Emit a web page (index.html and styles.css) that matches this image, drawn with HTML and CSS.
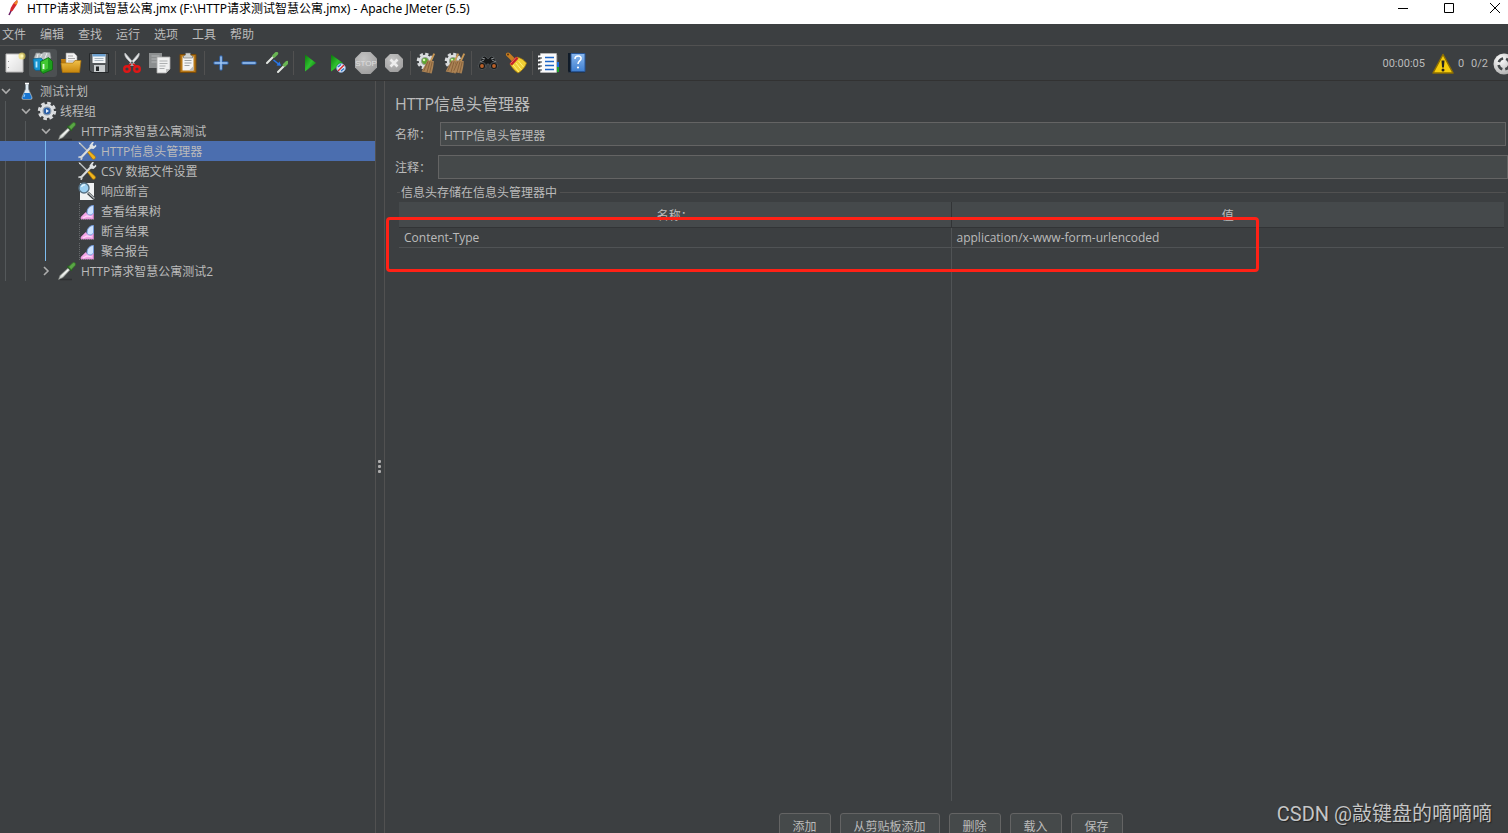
FILE: index.html
```html
<!DOCTYPE html>
<html lang="zh-CN">
<head>
<meta charset="utf-8">
<title>Apache JMeter (5.5)</title>
<link rel="stylesheet" href="styles.css">
</head>
<body>
<svg class="defs" width="0" height="0" aria-hidden="true">
  <defs>
    <linearGradient id="gGreen" x1="0" y1="0" x2="1" y2="1"><stop offset="0" stop-color="#0a7a0a"/><stop offset=".5" stop-color="#2fc02f"/><stop offset="1" stop-color="#067006"/></linearGradient>
    <linearGradient id="gGold" x1="0" y1="0" x2="0" y2="1"><stop offset="0" stop-color="#f0c04a"/><stop offset="1" stop-color="#c8860c"/></linearGradient>
    <linearGradient id="gPaper" x1="0" y1="0" x2="1" y2="1"><stop offset="0" stop-color="#ffffff"/><stop offset="1" stop-color="#dcdcdc"/></linearGradient>
    <linearGradient id="gBlue" x1="0" y1="0" x2="0" y2="1"><stop offset="0" stop-color="#8ab8ee"/><stop offset="1" stop-color="#3f7fd0"/></linearGradient>
    <radialGradient id="gGrey" cx=".4" cy=".3" r=".8"><stop offset="0" stop-color="#c4c4c4"/><stop offset="1" stop-color="#9c9c9c"/></radialGradient>
    <radialGradient id="gBall" cx=".35" cy=".3" r=".8"><stop offset="0" stop-color="#ffffff"/><stop offset="1" stop-color="#a8a8a8"/></radialGradient>
    <symbol id="pipette" viewBox="0 0 20 20"><path d="M3 18.500h12" stroke="#242627" stroke-width="1.500" opacity=".6"/><path d="M1.500 18.500l1.500-4 8-7.500 2 2L6 16.500z" fill="#d4d8d4" stroke="#7c817c" stroke-width=".6"/><path d="M4.500 15l6.500-6" stroke="#fff"/><path d="M10.500 5l4.500 4.500" stroke="#285f20" stroke-width="2"/><path d="M11.500 6l4-4c2-1.200 3.700.4 2.600 2.500L14.200 8.700z" fill="#5aa646" stroke="#327326" stroke-width=".8"/></symbol>
    <symbol id="tools" viewBox="0 0 20 20"><path d="M2.500 2L11 10.500" stroke="#b9bdc0" stroke-width="1.500"/><path d="M1.500 1l2 1.200-1 1z" fill="#eee"/><path d="M10.500 11.200l1.500-1.500 6 5.500c1.500 1.700-.8 4-2.500 2.700z" fill="#f2b51c" stroke="#a37109" stroke-width=".7"/><path d="M3.500 17L14 6" stroke="#d9dbdc" stroke-width="2.200"/><path d="M1.200 15.500l2.500-.5 2 2-.8 2-1.600-.3.500-1.200-1-.8-1.200.6z" fill="#d0d3d5"/><path d="M13 7.500l-.5-3L15.200 1l1.800.2-1.500 2.600 1.400 1.400L19 3.500l.3 2L16.500 8z" fill="#dfe2e4"/></symbol>
    <symbol id="chart" viewBox="0 0 20 20"><path d="M2.500 2v16M2 18.500h16" stroke="#686b6d" stroke-width="1" stroke-dasharray="1 1"/><path d="M4 18v-2l4.500-4.500 3 1.500 5-1v6z" fill="#f3a6e6" stroke="#d486c8" stroke-width=".7"/><path d="M10 11c.5-4 3-6.500 6.500-6.500V12c-1 1.500-2 2-3.500 2-2 0-3-1-3-3z" fill="#cfe3ff" stroke="#6f9bdf" stroke-width=".9"/><path d="M6 17l4-2 5 1" fill="none" stroke="#ffd6f7" stroke-width="1.200"/></symbol>
    <symbol id="gear" viewBox="0 0 20 20"><circle cx="10" cy="10" r="7.800" fill="none" stroke="#d8dadc" stroke-width="2.800" stroke-dasharray="3.600 2.520"/><circle cx="10" cy="10" r="7" fill="#dde0e2"/></symbol>
    <symbol id="down" viewBox="0 0 12 12"><path d="M2 4l4 4 4-4" fill="none" stroke="#adadad" stroke-width="1.600"/></symbol>
    <symbol id="broom" viewBox="0 0 14 20"><path d="M12.500.5L9 8" stroke="#c79755" stroke-width="1.800"/><path d="M6 7l6 .5c0 4.500-1 8-2 12L.5 17.500C2.500 14 4 11 6 7z" fill="#ab8254"/><path d="M6.500 8L2.500 17M8.500 8L5.500 18.500M10.500 8.500L8 19" stroke="#7b5630" stroke-width=".7"/></symbol>
    <symbol id="cleargear" viewBox="0 0 20 20"><use href="#gear" width="19" height="19"/><circle cx="9.500" cy="9.500" r="3.800" fill="#5da630" stroke="#9a9c9a"/><circle cx="8.500" cy="8.500" r="1.300" fill="#d4f5b2"/></symbol>
  </defs>
</svg>
<div class="app">
  <header class="titlebar">
    <svg class="feather" viewBox="0 0 14 18"><path d="M4 12C4 8 7 3 11 0c1 1 .5 3-.5 5L6.500 11z" fill="#d4262c"/><path d="M8 3.500L11 0c1 1 .5 3-.5 5z" fill="#ef8b27"/><path d="M3 15l2-4" fill="none" stroke="#6a1c64" stroke-width="1.500"/></svg>
    <h1 class="caption">HTTP请求测试智慧公寓.jmx (F:\HTTP请求测试智慧公寓.jmx) - Apache JMeter (5.5)</h1>
    <div class="winctl">
      <button aria-label="最小化"><svg viewBox="0 0 12 12"><path d="M1 6.500h10"/></svg></button>
      <button aria-label="最大化"><svg viewBox="0 0 12 12"><path d="M1.500 1.500h9v9h-9z"/></svg></button>
      <button aria-label="关闭"><svg viewBox="0 0 12 12"><path d="M1 1l10 10M11 1L1 11"/></svg></button>
    </div>
  </header>
  <nav class="menubar">
    <button>文件</button><button>编辑</button><button>查找</button><button>运行</button><button>选项</button><button>工具</button><button>帮助</button>
  </nav>
  <div class="toolbar">
    <button class="tool" aria-label="新建"><svg viewBox="0 0 22 22"><path d="M2 2h17v18H2z" fill="url(#gPaper)" stroke="#b9b9b9"/><path d="M4.500 9v1m0 5v1" stroke="#999"/><circle cx="18" cy="4" r="3.500" fill="#f3df60" opacity=".65"/><circle cx="18" cy="4" r="1.500" fill="#fff8b0"/></svg></button>
    <button class="tool lit" aria-label="模板"><svg viewBox="0 0 22 22"><path d="M2 6l2-5 4 0 1 1 3-2 6 .5 1 5.500-8 4z" fill="#b9bec0" stroke="#85898b" stroke-width=".6"/><path d="M6 2l-1 4m5-4L8 6m7-5l-2 5" stroke="#eceeef"/><path d="M1 7l8-1 2 2v10l-7 .5L2 17z" fill="#1794cf" stroke="#0a5c8b" stroke-width=".7"/><path d="M4.500 9.500v6" stroke="#b8e8ff" stroke-width="1.800"/><path d="M8.500 9.500l8-4 4 4v8L11 21.500 8.500 19z" fill="#1d9e1d" stroke="#0a680a" stroke-width=".7"/><path d="M9 10l7-3.500v10L10 19.500z" fill="#42c832"/><path d="M11.500 12v5" stroke="#dcffdc" stroke-width="1.800"/></svg></button>
    <button class="tool" aria-label="打开"><svg viewBox="0 0 22 22"><path d="M1 7h5l2 2h10v11H2z" fill="#bd7b0d"/><path d="M6 1h8l3 3v9H6z" fill="#f3f3f3" stroke="#999" stroke-width=".6"/><path d="M8 4h5M8 6.500h7M8 9h7" stroke="#aaa"/><path d="M1 11h12l2-2.500h6l-1.500 12h-17z" fill="url(#gGold)" stroke="#a8700b" stroke-width=".7"/></svg></button>
    <button class="tool" aria-label="保存"><svg viewBox="0 0 22 22"><path d="M1.500 1.500h19v19H4l-2.500-2z" fill="#54585b" stroke="#25282a"/><path d="M4.500 2h13v9h-13z" fill="#f2f5f7"/><path d="M4.500 2h13v2.500h-13z" fill="#6ca0cf"/><path d="M6.500 6.500h9m-9 2h9" stroke="#a8b4bd"/><path d="M6 13h11v7H6z" fill="#c9cdcf"/><path d="M8 14.500h3v4.500H8z" fill="#25282a"/></svg></button>
    <span class="sep"></span>
    <button class="tool" aria-label="剪切"><svg viewBox="0 0 22 22"><path d="M4 1c-1 3 2 6 5 9l3 4 1.500-2zM18 1c1 3-2 6-5 9l-3 4-1.500-2z" fill="#e7e9ea" stroke="#b5b8ba" stroke-width=".8"/><path d="M10 12l-3 2M12 12l3 2" stroke="#d01010" stroke-width="2"/><circle cx="6" cy="17" r="2.800" fill="none" stroke="#df1717" stroke-width="2.400"/><circle cx="16" cy="17" r="2.800" fill="none" stroke="#df1717" stroke-width="2.400"/></svg></button>
    <button class="tool" aria-label="复制"><svg viewBox="0 0 22 22"><path d="M0 1h13v15H0z" fill="#8c8f90"/><path d="M2.500 4h8m-8 3h6m-6 3h6" stroke="#b2b5b6"/><path d="M8 5h13v12l-4 4H8z" fill="#eff0f0" stroke="#a6a6a6" stroke-width=".8"/><path d="M10.500 9h8m-8 2.500h8m-8 2.500h6m-6 2.500h5" stroke="#adb0b1"/><path d="M17 21v-4h4z" fill="#bfc1c1"/></svg></button>
    <button class="tool" aria-label="粘贴"><svg viewBox="0 0 22 22"><path d="M3 2.500h16v18H3z" fill="#b87817" stroke="#76490a"/><path d="M5.500 4.500h11v14h-11z" fill="#f5f5f5"/><path d="M7.500 8.500h7m-7 2.500h7m-7 2.500h5" stroke="#9ea2a4"/><path d="M6.500 4l2-1V1h5v2l2 1v2h-9z" fill="#d0d3d1" stroke="#666" stroke-width=".6"/><path d="M12 18.500l4.500-4.500v4.500z" fill="#bbb"/></svg></button>
    <span class="sep"></span>
    <button class="tool" aria-label="展开"><svg viewBox="0 0 22 22"><path d="M11 5v12M5 11h12" stroke="#3467ac" stroke-width="3.400" stroke-linecap="round"/><path d="M11 5v12M5 11h12" stroke="#9fc8f5" stroke-width="1.500" stroke-linecap="round"/></svg></button>
    <button class="tool" aria-label="折叠"><svg viewBox="0 0 22 22"><path d="M5 11h12" stroke="#3467ac" stroke-width="3.400" stroke-linecap="round"/><path d="M5 11h12" stroke="#9fc8f5" stroke-width="1.500" stroke-linecap="round"/></svg></button>
    <button class="tool" aria-label="切换"><svg viewBox="0 0 22 22"><path d="M1 11l7-7M12 20l7-7" stroke="#e3e7e3" stroke-width="2" stroke-linecap="round"/><path d="M8 4l2.500-2.500M18.500 13l2.500-2.500" stroke="#69b553" stroke-width="3.400" stroke-linecap="round"/><path d="M7.500 8l5 4" stroke="#2878ec" stroke-width="1.600"/><path d="M10.500 13.500l4.500.3-1.500-4.300z" fill="#2878ec"/></svg></button>
    <span class="sep"></span>
    <button class="tool" aria-label="启动"><svg viewBox="0 0 22 22"><path d="M6 2.500v17L17 11z" fill="url(#gGreen)"/></svg></button>
    <button class="tool" aria-label="不停顿开始"><svg viewBox="0 0 22 22"><path d="M4 2.500v17L16 11z" fill="url(#gGreen)"/><circle cx="14" cy="16" r="4.300" fill="#edf2f8" stroke="#86a6d1"/><path d="M11 15l3-2.500M14 19l3-2.500" stroke="#2875cd" stroke-width="1.500"/><path d="M11 19l6-6" stroke="#d3292d" stroke-width="1.500"/></svg></button>
    <button class="tool" aria-label="停止"><svg viewBox="0 0 22 22"><path d="M6.500 0h9L22 6.500v9L15.500 22h-9L0 15.500v-9z" fill="url(#gGrey)"/><text x="11" y="14" class="stop">STOP</text></svg></button>
    <button class="tool" aria-label="关闭"><svg viewBox="0 0 22 22"><path d="M7 2h8l5 5v8l-5 5H7l-5-5V7z" fill="url(#gGrey)"/><path d="M7.500 7.500l7 7m0-7l-7 7" stroke="#ededed" stroke-width="2.600"/></svg></button>
    <span class="sep"></span>
    <button class="tool" aria-label="清除"><svg viewBox="0 0 22 22"><use href="#cleargear" width="19" height="19"/><use href="#broom" x="5" y="1" width="15" height="21"/></svg></button>
    <button class="tool" aria-label="清除全部"><svg viewBox="0 0 22 22"><use href="#cleargear" width="19" height="19"/><use href="#broom" x="1" y="1" width="15" height="21"/><use href="#broom" x="7" y="1" width="15" height="21"/></svg></button>
    <span class="sep"></span>
    <button class="tool" aria-label="查找"><svg viewBox="0 0 22 22"><path d="M5 5l3-1 3 3 3-3 3 1 4 9-3 3-5-1-1-4h-2l-1 4-5 1-3-3z" fill="#17191a" stroke="#555a5d" stroke-width=".7"/><path d="M5 6l3 1M17 6l-3 1M3 10l4-2M19 10l-4-2" stroke="#8c9194"/><circle cx="5" cy="14" r="3.700" fill="#17191a" stroke="#4d5153"/><circle cx="17" cy="14" r="3.700" fill="#17191a" stroke="#4d5153"/><circle cx="5" cy="14" r="1.900" fill="#b96028"/><circle cx="17" cy="14" r="1.900" fill="#b96028"/></svg></button>
    <button class="tool" aria-label="重置查找"><svg viewBox="0 0 22 22"><path d="M3 2.500l5 5" stroke="#c57d22" stroke-width="4" stroke-linecap="round"/><circle cx="3" cy="2.500" r="1" fill="#5d3408"/><path d="M5 12l7-7c4 1 7 3 9.500 6-1 4-5 8-8.500 10-3-2-6-5-8-9z" fill="#f0cf35" stroke="#a77a06" stroke-width=".7"/><path d="M8 13l6 7m-3-9l5.500 7m-3-9l5 6" stroke="#fff07a"/><path d="M4.500 11.500L11 4.500l2.500 2-6.500 7z" fill="#c4202a"/><path d="M5.500 11.500l5.500-6" stroke="#ec7b54"/></svg></button>
    <span class="sep"></span>
    <button class="tool" aria-label="函数助手"><svg viewBox="0 0 22 22"><path d="M18 3h2v17h-2z" fill="#555"/><path d="M19 10h2v5h-2z" fill="#1a6ddd"/><path d="M19 15h2v5h-2z" fill="#18a428"/><path d="M2.500 1.500h16v19h-16z" fill="#fafafa" stroke="#ccc" stroke-width=".5"/><path d="M7 5.500h9m-9 4h9m-9 4h9m-9 4h9" stroke="#1d66c8" stroke-width="1.400"/><path d="M0 4.500h4M0 8.500h4M0 12.500h4M0 16.500h4" stroke="#fff" stroke-width="2"/><path d="M1 6h3m-3 4h3m-3 4h3m-3 4h3" stroke="#34383a"/></svg></button>
    <button class="tool" aria-label="帮助"><svg viewBox="0 0 22 22"><path d="M2 1h4v20H3l-1-2z" fill="#101b28"/><path d="M5 1.500h14v18H5z" fill="url(#gBlue)" stroke="#275596"/><path d="M3 20.500h16" stroke="#27374a"/><path d="M9 7c0-4 7-4 6 0-.4 2-3 2-3 5" fill="none" stroke="#fff" stroke-width="1.500"/><circle cx="12" cy="15.500" r="1.100" fill="#fff"/></svg></button>
    <div class="status">
      <span>00:00:05</span>
      <svg class="warn" viewBox="0 0 22 22"><path d="M11 1.500L21 20H1z" fill="#f6cc0c" stroke="#8f7000" stroke-width="1.500" stroke-linejoin="round"/><path d="M9.500 7.500h3l-.6 7h-1.800z" fill="#222"/><circle cx="11" cy="17" r="1.500" fill="#222"/></svg>
      <span>0</span>
      <span class="threads">0/2</span>
      <svg class="ball" viewBox="0 0 22 22"><circle cx="11" cy="11" r="10.500" fill="url(#gBall)"/><circle cx="11" cy="11" r="5.500" fill="none" stroke="#44484a" stroke-width="2.600" stroke-dasharray="5.600 3.040" stroke-dashoffset="-1.500"/></svg>
    </div>
  </div>
  <main class="main">
    <aside class="side">
      <ul class="tree">
        <li><div class="row"><svg class="chev"><use href="#down"/></svg><svg class="ico" viewBox="0 0 20 20"><path d="M8.500 3h3v5l3.500 8c.5 1.500 0 2.500-1.500 2.500h-7c-1.500 0-2-1-1.500-2.500L8.500 8z" fill="#dfeaf2" stroke="#7e8b94" stroke-width=".7"/><path d="M7.300 12h5.400l1.800 4c.4 1.300 0 2-1.200 2H6.700c-1.200 0-1.600-.7-1.200-2z" fill="#1875d1"/><path d="M7.800 13.500l-1 2.500" stroke="#8fd0ff" stroke-width="1.200"/><path d="M8 2.500h4" stroke="#fff" stroke-width="1.500"/></svg><span>测试计划</span></div>
          <ul class="g1">
            <li><div class="row"><svg class="chev"><use href="#down"/></svg><svg class="ico" viewBox="0 0 20 20"><use href="#gear" width="20" height="20"/><circle cx="10" cy="10" r="3.900" fill="#2b60a8" stroke="#8f9cab" stroke-width="1.200"/><path d="M9 8v4l3-2z" fill="#e5f0ff"/></svg><span>线程组</span></div>
              <ul class="g2">
                <li><div class="row http"><svg class="chev"><use href="#down"/></svg><svg class="ico"><use href="#pipette"/></svg><span>HTTP请求智慧公寓测试</span></div>
                  <ul class="g3">
                    <li><div class="row selected"><svg class="ico"><use href="#tools"/></svg><span>HTTP信息头管理器</span></div></li>
                    <li><div class="row"><svg class="ico"><use href="#tools"/></svg><span>CSV 数据文件设置</span></div></li>
                    <li><div class="row"><svg class="ico" viewBox="0 0 20 20"><path d="M3 2h14v17H3z" fill="#f0f2f3"/><path d="M11 12l6.500 6" stroke="#363b3e" stroke-width="3"/><path d="M11.500 12l6 5.500" stroke="#b3b8bb" stroke-width="1.200"/><circle cx="7" cy="7" r="5" fill="#9bd0f2" stroke="#567184" stroke-width="1.400"/><path d="M4.500 6c.5-1.500 2-2.300 3.500-2" fill="none" stroke="#e8f8ff" stroke-width="1.300"/></svg><span>响应断言</span></div></li>
                    <li><div class="row"><svg class="ico"><use href="#chart"/></svg><span>查看结果树</span></div></li>
                    <li><div class="row"><svg class="ico"><use href="#chart"/></svg><span>断言结果</span></div></li>
                    <li><div class="row"><svg class="ico"><use href="#chart"/></svg><span>聚合报告</span></div></li>
                  </ul>
                </li>
                <li><div class="row"><svg class="chev" viewBox="0 0 12 12"><path d="M4 2l4 4-4 4" fill="none" stroke="#adadad" stroke-width="1.600"/></svg><svg class="ico"><use href="#pipette"/></svg><span>HTTP请求智慧公寓测试2</span></div></li>
              </ul>
            </li>
          </ul>
        </li>
      </ul>
    </aside>
    <div class="divider"><i></i><i></i><i></i></div>
    <section class="panel">
      <h2 class="heading">HTTP信息头管理器</h2>
      <div class="field name"><label for="name">名称：</label><input id="name" type="text" value="HTTP信息头管理器"></div>
      <div class="field"><label for="comment">注释：</label><input id="comment" type="text"></div>
      <div class="store">
        <div class="legend"><span>信息头存储在信息头管理器中</span></div>
        <div class="tablebox">
          <table>
            <thead><tr><th>名称：</th><th>值</th></tr></thead>
            <tbody><tr class="entry"><td>Content-Type</td><td>application/x-www-form-urlencoded</td></tr><tr><td></td><td></td></tr></tbody>
          </table>
          <div class="mark"></div>
        </div>
        <div class="actions"><button>添加</button><button class="wide">从剪贴板添加</button><button>删除</button><button>载入</button><button>保存</button></div>
      </div>
    </section>
  </main>
  <div class="credit">CSDN @敲键盘的嘀嘀嘀</div>
</div>
</body>
</html>
```
FILE: styles.css
```css
* { box-sizing: border-box; }
body {
  margin: 0;
  overflow: hidden;
  background: #3c3f41;
  color: #bbbbbb;
  font: 12px/20px "Open Sans", "Noto Sans CJK SC", sans-serif;
}
button, input { font: inherit; color: inherit; }
button { background: none; border: 0; padding: 0; }
ul { list-style: none; margin: 0; padding: 0; }
.defs { position: absolute; }
.app { position: relative; display: flex; flex-direction: column; height: 100vh; overflow: hidden; }

.titlebar { display: flex; flex: none; height: 24px; background: #fff; color: #000; }
.feather { width: 14px; height: 18px; margin: 0 7px 0 6px; }
.caption { margin: 0; font: 400 12px/18px "Noto Sans", "Noto Sans CJK SC", sans-serif; white-space: nowrap; }
.winctl { display: flex; gap: 34px; margin-left: auto; padding: 2px 7px 0 0; height: 14px; }
.winctl svg { display: block; width: 12px; height: 12px; fill: none; stroke: #000; }

.menubar { display: flex; flex: none; gap: 14px; height: 22px; padding: 1px 0 0 2px; border-bottom: 1px solid #515151; }

.toolbar { display: flex; flex: none; align-items: center; height: 35px; padding-left: 1px; border-bottom: 1px solid #323232; overflow: hidden; }
.tool { flex: none; display: flex; align-items: center; justify-content: center; width: 28px; height: 28px; border-radius: 3px; }
.tool svg { width: 22px; height: 22px; }
.lit { background: #4c5052; }
.sep { flex: none; width: 1px; height: 24px; margin: 0 2px; background: #515151; }
.stop { font: 8px "Liberation Sans", sans-serif; fill: #dedede; text-anchor: middle; }
.status { display: flex; align-items: center; margin: 0 -7px 0 auto; padding-top: 1px; white-space: nowrap; font-family: Roboto, sans-serif; font-size: 11px; }
.status svg { flex: none; width: 22px; height: 22px; }
.warn { margin: 0 4px 0 7px; }
.threads { margin: 0 5px 0 7px; }

.main { display: flex; flex: 1; min-height: 0; }
.side { flex: none; width: 376px; border-right: 1px solid #515151; }
.tree ul { position: relative; }
.tree ul::before { content: ""; position: absolute; top: 0; bottom: 0; width: 1px; background: #54585a; }
.tree .g1::before { left: 5px; }
.tree .g2::before { left: 25px; }
.tree .g3::before { left: 45px; background: #7dbdf0; }
.row { display: flex; align-items: center; height: 20px; white-space: nowrap; }
.row span { padding-top: 2px; }
.g1 .row { padding-left: 20px; }
.g2 .row { padding-left: 40px; }
.g3 .row { padding-left: 77px; }
.chev { width: 12px; height: 12px; margin-right: 5px; }
.ico { width: 20px; height: 20px; margin-right: 3px; }
.g2 .ico { margin-right: 4px; }
.selected { background: #4b6eaf; }

.divider { flex: none; display: flex; flex-direction: column; align-items: center; justify-content: center; gap: 2px; width: 9px; padding: 18px 1px 0 0; border-right: 1px solid #515151; }
.divider i { width: 3px; height: 3px; border-radius: 1px; background: #adadad; }

.panel { flex: 1; min-width: 0; display: flex; flex-direction: column; padding: 11px 0 0 10px; }
.heading { margin: 0; font-size: 16px; font-weight: 400; line-height: 24px; }
.field { display: flex; align-items: center; height: 24px; margin-top: 9px; }
.name { margin-top: 6px; padding-right: 2px; }
.field label { flex: none; width: 43px; padding-top: 2px; white-space: nowrap; }
.name label { width: 45px; }
.field input { flex: 1; min-width: 0; height: 24px; padding: 1px 3px 0; border: 1px solid #646464; border-radius: 0; background: #45494a; outline: 0; }
.store { display: flex; flex: 1; flex-direction: column; min-height: 0; padding: 3px 4px 0; }
.legend { display: flex; align-items: center; gap: 1px; height: 20px; margin: 0 -2px; white-space: nowrap; }
.legend span { padding: 2px 2px 0 0; }
.legend::before, .legend::after { content: ""; height: 1px; background: #515151; }
.legend::before { width: 3px; }
.legend::after { flex: 1; }
.tablebox { position: relative; flex: 1; min-height: 0; }
table { width: 100%; height: 100%; table-layout: fixed; border-collapse: separate; border-spacing: 0; }
th { height: 26px; padding: 3px 0 0; background: #45494b; border-bottom: 1px solid #323436; font-weight: 400; }
th:first-child { border-right: 1px solid #323436; }
td { padding: 0 5px; }
td:first-child { border-right: 1px solid #505355; }
.entry td { height: 20px; line-height: 18px; border-bottom: 1px solid #505355; }
.mark { position: absolute; left: -13px; top: 15px; width: 873px; height: 55px; border: 3px solid #ff2116; border-radius: 4px; }
.actions { flex: none; display: flex; justify-content: center; gap: 9px; height: 32px; padding: 12px 2px 0 0; }
.actions button { width: 52px; height: 26px; padding-top: 1px; background: #45494a; border: 1px solid #646464; border-radius: 3px; }
.actions .wide { width: 100px; }
.credit { position: absolute; right: 16px; bottom: 5px; font: 20px/28px Roboto, "Noto Sans CJK SC", sans-serif; color: #c4c5c6; text-shadow: 1px 1px 1px #222; white-space: nowrap; }
```
